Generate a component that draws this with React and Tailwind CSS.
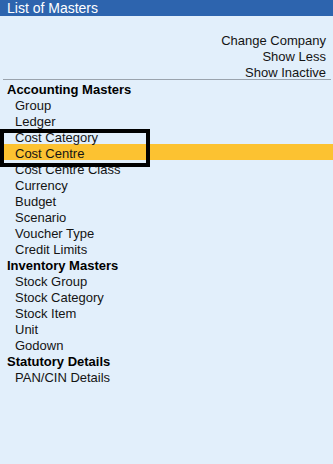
import React from 'react'

const sections = [
    {
        title: 'Accounting Masters',
        items: ['Group', 'Ledger', 'Cost Category', 'Cost Centre', 'Cost Centre Class', 'Currency', 'Budget', 'Scenario', 'Voucher Type', 'Credit Limits'],
    },
    {
        title: 'Inventory Masters',
        items: ['Stock Group', 'Stock Category', 'Stock Item', 'Unit', 'Godown'],
    },
    {
        title: 'Statutory Details',
        items: ['PAN/CIN Details'],
    },
]

const Row = ({ label, active }) => (
    <div className={`h-4 leading-[19px] pl-[11px] ${active ? 'bg-[#fcc231]' : ''}`}>
        {label}
    </div>
)

const App = () => {
    return (
        <div className="w-[333px] h-[464px] bg-[#e2effb] text-[13px] text-[#141414] overflow-hidden" style={{ fontFamily: '"Liberation Sans", Arial, sans-serif' }}>
            <div className="h-4 bg-[#2d64ae] text-white text-[14px] leading-4 pl-[7px]">List of Masters</div>

            <div className="pt-[15px] pr-[7px] flex flex-col items-end">
                <div className="h-4 leading-[19px]">Change Company</div>
                <div className="h-4 leading-[19px]">Show Less</div>
                <div className="h-4 leading-[19px]">Show Inactive</div>
            </div>
            <div className="ml-[3px] mr-[2px] h-px bg-[#9aa3ad]"></div>

            <div className="ml-[4px]">
                {sections.map((s) => (
                    <div key={s.title}>
                        <div className="h-4 leading-[19px] pl-[3px] font-bold text-black">{s.title}</div>
                        {s.title === 'Accounting Masters' ? (
                            <>
                                <Row label="Group" />
                                <Row label="Ledger" />
                                <div className="relative">
                                    <Row label="Cost Category" />
                                    <Row label="Cost Centre" active />
                                    <div className="absolute -left-[4px] top-px w-[150px] h-[38px] border-4 border-black"></div>
                                </div>
                                {s.items.slice(4).map((i) => <Row key={i} label={i} />)}
                            </>
                        ) : (
                            s.items.map((i) => <Row key={i} label={i} />)
                        )}
                    </div>
                ))}
            </div>
        </div>
    )
}

export default App
